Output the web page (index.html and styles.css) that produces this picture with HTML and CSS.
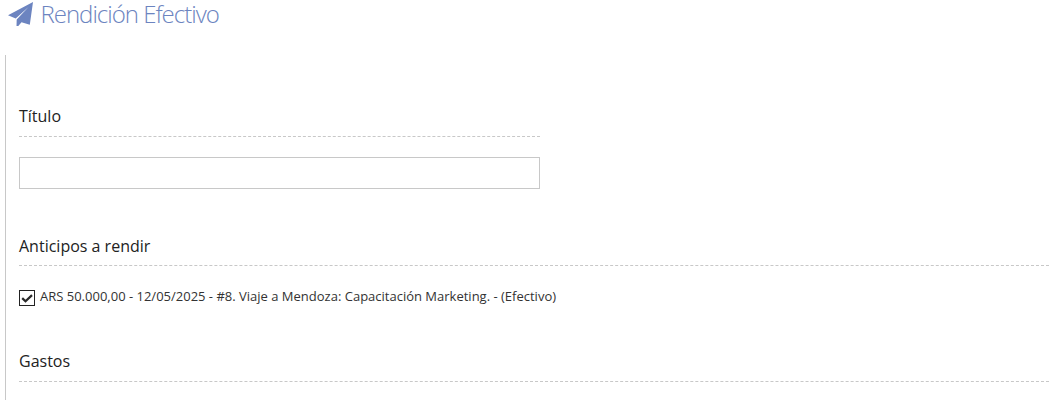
FILE: index.html
```html
<!DOCTYPE html>
<html lang="es">
<head>
    <meta charset="UTF-8">
    <title>Rendición Efectivo</title>
    <link rel="stylesheet" href="styles.css">
</head>
<body>
    <h1 class="page-title">
        <svg class="title-icon" viewBox="0 0 25 25"><path d="M25 0L0 13.200L7.700 16.600L20.500 5L8.700 17.500L8.500 24L10.300 24L13.500 20.300L21.800 22.800Z"/></svg>
        <span>Rendición Efectivo</span>
    </h1>

    <form class="form-box">
        <div class="section section-title">
            <h2 class="section-header">Título</h2>
            <input type="text" class="text-input">
        </div>

        <div class="section section-advances">
            <h2 class="section-header">Anticipos a rendir</h2>
            <label class="check-row">
                <input type="checkbox" class="check-input" checked>
                <span class="check-box">
                    <svg viewBox="0 0 14 14"><path d="M2.200 7.100l3.300 3.200L12 4.100"/></svg>
                </span>
                <span>ARS 50.000,00 - 12/05/2025 - #8. Viaje a Mendoza: Capacitación Marketing. - (Efectivo)</span>
            </label>
        </div>

        <div class="section">
            <h2 class="section-header">Gastos</h2>
        </div>
    </form>
</body>
</html>
```

FILE: styles.css
```css
* {
    margin: 0;
    padding: 0;
    box-sizing: border-box;
}
body {
    height: 400px;
    overflow: hidden;
    background: #fff;
    color: #222;
    font-family: "Open Sans", sans-serif;
    font-size: 13px;
}
.page-title {
    display: flex;
    align-items: flex-start;
    gap: 7.500px;
    height: 55px;
    padding-left: 8px;
    color: #6c84c0;
    font-size: 24px;
    font-weight: 300;
    line-height: 28px;
    letter-spacing: -1px;
}
.title-icon {
    width: 25px;
    height: 25px;
    margin-top: 2px;
    fill: currentColor;
}
.form-box {
    height: 345px;
    margin-left: 5px;
    padding: 48px 0 0 13px;
    border-left: 1px solid #c8c8c8;
}
.section-header {
    height: 34px;
    padding-top: 2px;
    border-bottom: 1px dashed #c8c8c8;
    font-size: 16px;
    font-weight: 400;
    line-height: 22px;
}
.section-title {
    width: 521px;
    height: 130px;
}
.text-input {
    display: block;
    width: 100%;
    height: 32px;
    margin-top: 20px;
    padding: 0 6px;
    border: 1px solid #c8c8c8;
    font: inherit;
}
.section-advances {
    height: 115px;
}
.section-advances .section-header {
    height: 33px;
}
.check-row {
    display: flex;
    align-items: center;
    height: 20px;
    margin-top: 20px;
    color: #333;
}
.check-input {
    display: none;
}
.check-box {
    width: 16px;
    height: 16px;
    margin: 4px 5px 0 0;
    border: 1px solid #222;
}
.check-box svg {
    display: block;
    width: 14px;
    height: 14px;
    fill: none;
    stroke: #2a2a2a;
    stroke-width: 2.200;
}
```
